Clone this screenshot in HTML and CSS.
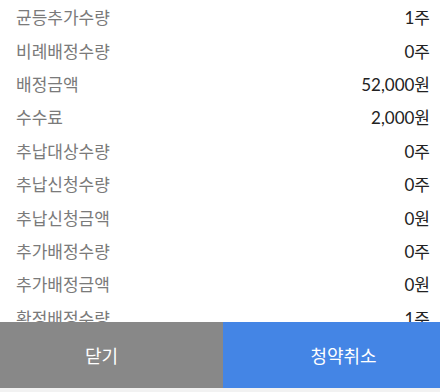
FILE: index.html
```html
<!DOCTYPE html>
<html lang="ko">
<head>
	<meta charset="utf-8" />
	<title>청약 상세</title>
	<link rel="stylesheet" href="styles.css">
</head>
<body>
<div id="sheet">
	<div id="detailList">
		<div class="row"><span class="label">균등추가수량</span><span class="value">1주</span></div>
		<div class="row"><span class="label">비례배정수량</span><span class="value">0주</span></div>
		<div class="row"><span class="label">배정금액</span><span class="value">52,000원</span></div>
		<div class="row"><span class="label">수수료</span><span class="value">2,000원</span></div>
		<div class="row"><span class="label">추납대상수량</span><span class="value">0주</span></div>
		<div class="row"><span class="label">추납신청수량</span><span class="value">0주</span></div>
		<div class="row"><span class="label">추납신청금액</span><span class="value">0원</span></div>
		<div class="row"><span class="label">추가배정수량</span><span class="value">0주</span></div>
		<div class="row"><span class="label">추가배정금액</span><span class="value">0원</span></div>
		<div class="row"><span class="label">확정배정수량</span><span class="value">1주</span></div>
	</div>
	<div id="buttonBar">
		<button class="btn closeBtn">닫기</button>
		<button class="btn cancelBtn">청약취소</button>
	</div>
</div>
</body>
</html>
```

FILE: styles.css
```css
html, body{
	margin: 0;
	height: 100%;
}
body{
	font-family: Lato, "Noto Sans CJK KR", sans-serif;
	background-color: #f2f2f2;
}

#sheet{
	display: flex;
	flex-direction: column;
	height: 388px;
	background-color: #fff;
}
#detailList{
	flex: 1;
	overflow: hidden;
}
.row{
	display: flex;
	justify-content: space-between;
	align-items: center;
	height: 33.4px;
	padding: 0 10px 0 16px;
	font-size: 17px;
}
.label{
	color: #7a7a7a;
}
.value{
	color: #222;
}

#buttonBar{
	display: flex;
	height: 66px;
}
.btn{
	border: 0;
	margin: 0;
	font-family: "Noto Sans CJK KR", sans-serif;
	font-size: 18px;
	color: #fff;
}
.btn:focus{
	outline: none;
}
.closeBtn{
	width: 223px;
	padding: 0 20px 0 0;
	background-color: #888888;
}
.cancelBtn{
	flex: 1;
	padding: 0 0 0 24px;
	background-color: #4485e5;
}
```
